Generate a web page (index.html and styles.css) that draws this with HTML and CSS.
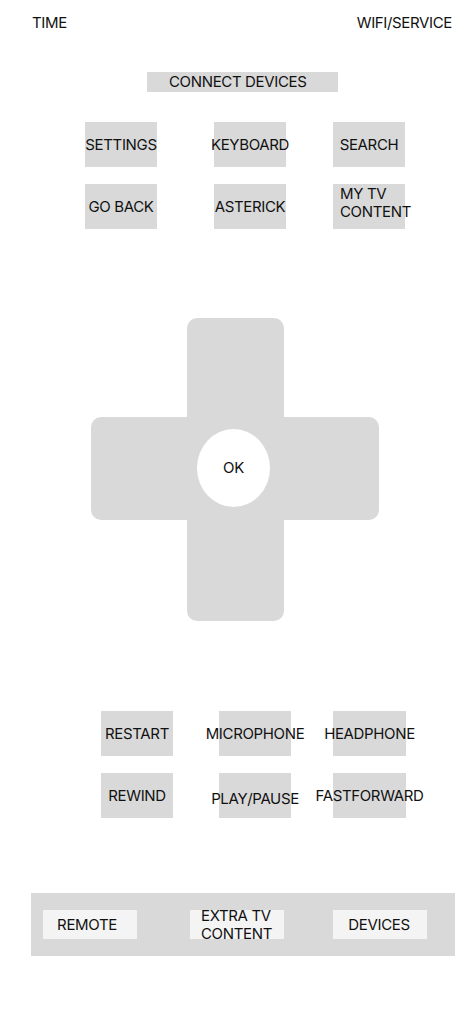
FILE: index.html
```html
<!DOCTYPE html>
<html lang="en">
<head>
<meta charset="utf-8">
<title>TV Remote</title>
<link rel="stylesheet" href="styles.css">
</head>
<body>
<div class="screen">
  <header class="status">
    <span>TIME</span>
    <span>WIFI/SERVICE</span>
  </header>

  <div class="connect">CONNECT DEVICES</div>

  <div class="grid grid-top">
    <div class="btn">SETTINGS</div>
    <div class="btn">KEYBOARD</div>
    <div class="btn">SEARCH</div>
    <div class="btn">GO BACK</div>
    <div class="btn">ASTERICK</div>
    <div class="btn btn-wrap">MY TV<br>CONTENT</div>
  </div>

  <div class="dpad">
    <div class="bar-v"></div>
    <div class="bar-h"></div>
    <div class="ok">OK</div>
  </div>

  <div class="grid grid-bottom">
    <div class="btn">RESTART</div>
    <div class="btn">MICROPHONE</div>
    <div class="btn btn-wide">HEADPHONE</div>
    <div class="btn">REWIND</div>
    <div class="btn btn-low">PLAY/PAUSE</div>
    <div class="btn btn-wide">FASTFORWARD</div>
  </div>

  <nav class="tabbar">
    <div class="tab tab-first">REMOTE</div>
    <div class="tab tab-wrap">EXTRA TV<br>CONTENT</div>
    <div class="tab tab-last">DEVICES</div>
  </nav>
</div>
</body>
</html>
```

FILE: styles.css
```css
html, body {
  margin: 0;
  padding: 0;
  background: #ffffff;
}

body {
  font-family: Inter, "Liberation Sans", Arial, sans-serif;
  font-size: 15px;
  line-height: 18px;
  letter-spacing: -0.35px;
  color: #111111;
}

.screen {
  width: 469px;
}

.status {
  display: flex;
  justify-content: space-between;
  padding: 14px 17px 0 32px;
}

.connect {
  margin: 40px 0 0 147px;
  width: 191px;
  height: 20px;
  line-height: 20px;
  background: #d9d9d9;
  box-sizing: border-box;
  padding-left: 22px;
  white-space: nowrap;
}

.grid {
  display: grid;
  row-gap: 17px;
}

.grid-top {
  margin: 30px 0 0 85px;
  grid-template-columns: 129px 119px 72px;
}

.grid-bottom {
  margin: 90px 0 0 101px;
  grid-template-columns: 118px 114px 73px;
}

.btn {
  width: 72px;
  height: 45px;
  background: #d9d9d9;
  display: flex;
  align-items: center;
  justify-content: center;
  white-space: nowrap;
}

.btn-wide {
  width: 73px;
}

.btn-low {
  padding-top: 6px;
  box-sizing: border-box;
}

.btn-wrap {
  display: block;
  box-sizing: border-box;
  padding: 1px 0 0 7px;
  text-align: left;
}

.dpad {
  margin: 89px 0 0 91px;
  width: 288px;
  display: grid;
  grid-template-columns: 96px 97px 95px;
  grid-template-rows: 99px 103px 101px;
}

.bar-v {
  grid-column: 2;
  grid-row: 1 / 4;
  background: #d9d9d9;
  border-radius: 10px;
}

.bar-h {
  grid-column: 1 / 4;
  grid-row: 2;
  background: #d9d9d9;
  border-radius: 10px;
}

.ok {
  grid-column: 2;
  grid-row: 2;
  width: 73px;
  height: 78px;
  margin: 12px 0 0 10px;
  border-radius: 50%;
  background: #ffffff;
  display: flex;
  align-items: center;
  justify-content: center;
}

.tabbar {
  margin: 75px 0 0 31px;
  width: 424px;
  height: 63px;
  background: #d9d9d9;
  box-sizing: border-box;
  padding: 17px 0 0 12px;
  display: flex;
  gap: 53px;
  align-items: flex-start;
}

.tab {
  width: 94px;
  height: 29px;
  background: #f4f4f4;
  display: flex;
  align-items: center;
  justify-content: center;
  white-space: nowrap;
  box-sizing: border-box;
}

.tab-first {
  padding-right: 6px;
}

.tab-last {
  margin-left: -4px;
  padding-right: 2px;
}

.tab-wrap {
  justify-content: flex-start;
  padding-left: 11px;
}
```
